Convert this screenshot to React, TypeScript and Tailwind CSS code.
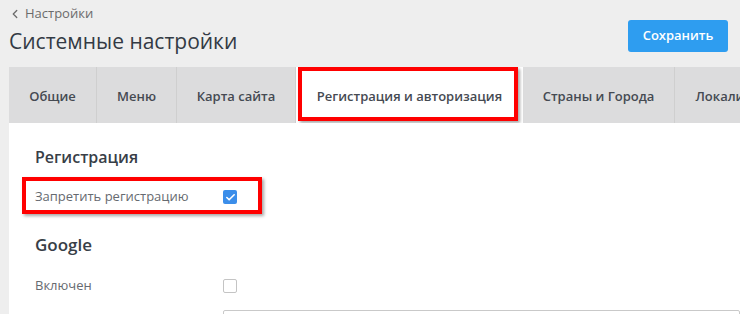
import { Check, ChevronLeft } from "lucide-react";

const tabs = [
  { label: "Общие", w: "w-[88px]" },
  { label: "Меню", w: "w-[80px]" },
  { label: "Карта сайта", w: "w-[119px]" },
  { label: "Регистрация и авторизация", w: "w-[227px]", active: true },
  { label: "Страны и Города", w: "w-[152px]" },
  { label: "Локализация", w: "w-[130px]" },
];

function Checkbox({ checked }: { checked?: boolean }) {
  if (checked) {
    return (
      <span className="flex h-[14px] w-[14px] items-center justify-center rounded-[2px] bg-[#3b8eea]">
        <Check size={11} strokeWidth={3.5} className="text-white" />
      </span>
    );
  }
  return <span className="block h-[14px] w-[14px] rounded-[2px] border border-[#c4c4c4] bg-white" />;
}

export default function App() {
  return (
    <div className="h-[314px] w-[740px] overflow-hidden bg-[#eeeeee] font-['Open_Sans',sans-serif]">
      <div className="flex items-start justify-between pl-[9px] pr-[12px]">
        <div>
          <div className="mt-[5px] -ml-[1px] flex h-[18px] items-center gap-[3px] text-[13px] text-[#6b6b6b]">
            <ChevronLeft size={14} strokeWidth={2.25} />
            <span>Настройки</span>
          </div>
          <h1 className="mt-[3px] text-[21px] leading-[30px] text-[#333a44]">Системные настройки</h1>
        </div>
        <button className="mt-[20px] h-[32px] w-[100px] rounded-[3px] bg-[#2e9df0] text-[13px] font-semibold text-white">
          Сохранить
        </button>
      </div>

      <div className="mt-[11px] ml-[9px] flex h-[56px] overflow-hidden">
        {tabs.map((t) => (
          <div
            key={t.label}
            className={
              t.active
                ? `relative flex shrink-0 items-center justify-center bg-white text-[13px] font-semibold text-[#454a52] ${t.w}`
                : `flex shrink-0 items-center justify-center border-r border-[#cfcfcf] bg-[#dcdcdd] text-[13px] font-semibold text-[#454a52] ${t.w}`
            }
          >
            <span className="mt-[3px] whitespace-nowrap">{t.label}</span>
            {t.active && (
              <div className="absolute top-0 bottom-[2px] left-[2px] right-[5px] border-4 border-[#ff0000] shadow-[2px_2px_3px_rgba(0,0,0,0.35)]" />
            )}
          </div>
        ))}
      </div>

      <div className="ml-[9px] h-[200px] bg-white pl-[26px] pt-[23px]">
        <h2 className="text-[16px] font-semibold leading-[22px] text-[#383e47]">Регистрация</h2>

        <div className="relative mt-[16px] flex h-[26px] items-center">
          <span className="w-[188px] text-[13px] text-[#666a70]">Запретить регистрацию</span>
          <Checkbox checked />
          <div className="absolute top-[-7px] left-[-13px] h-[37px] w-[240px] border-4 border-[#ff0000] shadow-[2px_2px_3px_rgba(0,0,0,0.35)]" />
        </div>

        <h2 className="mt-[23px] text-[17px] font-semibold leading-[24px] text-[#383e47]">Google</h2>

        <div className="mt-[16px] flex h-[26px] items-center">
          <span className="w-[188px] text-[13px] text-[#666a70]">Включен</span>
          <Checkbox />
        </div>

        <div className="mt-[11px] ml-[188px] h-[32px] rounded-[2px] border border-[#c9c9c9]" />
      </div>
    </div>
  );
}
